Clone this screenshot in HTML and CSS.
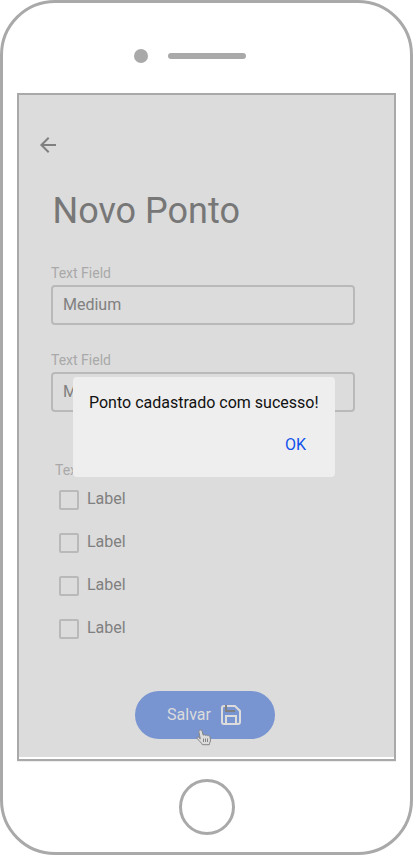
FILE: index.html
```html
<!DOCTYPE html>
<html lang="pt-BR">
<head>
<meta charset="utf-8">
<title>Novo Ponto</title>
<link rel="stylesheet" href="styles.css">
</head>
<body>
<div class="phone">
  <div class="speaker"><span class="camera"></span><span class="slot"></span></div>
  <div class="screen">
    <main class="page">
      <svg class="back" width="24" height="24" viewBox="0 0 24 24"><path d="M20 12H5.4M12.7 4.7L5.4 12l7.3 7.3" fill="none" stroke="#808080" stroke-width="2"/></svg>
      <h1 class="title">Novo Ponto</h1>
      <div class="field"><div class="caption">Text Field</div><div class="input">Medium</div></div>
      <div class="field"><div class="caption">Text Field</div><div class="input">Medium</div></div>
      <div class="options">
        <div class="caption">Text Field</div>
        <div class="option"><span class="box"></span><span class="name">Label</span></div>
        <div class="option"><span class="box"></span><span class="name">Label</span></div>
        <div class="option"><span class="box"></span><span class="name">Label</span></div>
        <div class="option"><span class="box"></span><span class="name">Label</span></div>
      </div>
      <div class="save">
        <span class="save-text">Salvar</span>
        <svg width="20" height="20" viewBox="0 0 20 20" fill="none" stroke="#dcdcdc" stroke-width="2"><path d="M3 1H14L19 6V17Q19 19 17 19H3Q1 19 1 17V3Q1 1 3 1Z"/><path d="M5 19V11H15V19"/><path d="M5 0V6H14" stroke="#808080"/></svg>
      </div>
      <svg class="cursor" width="16" height="18" viewBox="0 0 16 18"><path d="M4.3 1C5.5.6 6 1.7 6.2 2.6L7.2 6.2C8 5.4 9 5.7 9.4 6.4 10.2 5.7 11.2 6 11.6 6.8 12.6 6.2 13.8 6.8 14 8L14.5 11C14.6 12.5 13.5 13.5 13.3 15.7H6.3C5.6 13.7 3 12 1.4 9.7 .4 8.4 1.7 7.5 2.8 8.4L4.3 9.8 2.9 3C2.7 2 3.3 1.2 4.3 1Z" fill="#dcdcdc" stroke="#858585"/><path d="M7.5 9.5V13M9.5 9.5V13M11.5 9.5V13" stroke="#858585" fill="none"/></svg>
    </main>
    <div class="dialog"><div class="message">Ponto cadastrado com sucesso!</div><div class="ok">OK</div></div>
  </div>
  <div class="home"></div>
</div>
</body>
</html>
```
FILE: styles.css
```css
* { box-sizing: border-box; }
body { margin: 0; background: #fff; font-family: Roboto, sans-serif; }
.phone {
  width: 413px; height: 855px;
  border: 3px solid #a9a9a9; border-radius: 55px;
  display: flex; flex-direction: column;
}
.speaker {
  height: 90px; padding: 46px 0 0 131px;
  display: flex; align-items: flex-start; gap: 20px;
}
.camera { width: 14px; height: 14px; border-radius: 50%; background: #a9a9a9; }
.slot { width: 78px; height: 6px; margin-top: 4px; border-radius: 3px; background: #a9a9a9; }
.screen {
  position: relative; width: 379px; height: 668px; margin-left: 14px;
  border: 2px solid #a9a9a9; box-shadow: 0 1px 0 #eee;
}
.page { position: relative; height: 662px; background: #dcdcdc; padding: 38px 39px 0 32px; color: #808080; }
.back { display: block; margin-left: -15px; }
.title {
  margin: 33px 0 33px 1.5px; height: 42px;
  font-size: 36px; line-height: 42px; font-weight: 400; color: #777; white-space: nowrap;
}
.field { height: 87px; }
.caption { height: 16px; margin-bottom: 4px; font-size: 14px; line-height: 16px; color: #a9a9a9; }
.input {
  height: 40px; border: 2px solid #b9b9b9; border-radius: 4px;
  padding-left: 10px; font-size: 16px; line-height: 36px;
}
.options { margin: 23px 0 0 4px; }
.options .caption { margin-bottom: 12px; }
.option { display: flex; gap: 8px; height: 43px; padding-left: 4px; }
.box { width: 20px; height: 20px; border: 2px solid #b9b9b9; border-radius: 2px; }
.name { height: 20px; font-size: 16px; line-height: 18px; }
.save {
  width: 140px; height: 48px; margin: 29px 0 0 84px; padding-right: 2px; border-radius: 24px;
  background: #7894d1; color: #dcdcdc; font-size: 16px;
  display: flex; align-items: center; justify-content: center; gap: 10px;
}
.save-text { padding-bottom: 2px; }
.cursor { position: absolute; left: 177px; top: 634px; }
.dialog {
  position: absolute; left: 54px; top: 282px; width: 262px; height: 100px;
  background: #eee; border-radius: 4px; padding: 16px; font-size: 16px; line-height: 20px; color: #111;
}
.message { white-space: nowrap; }
.ok { margin: 22px 13px 0 0; text-align: right; color: #1152eb; }
.home { width: 56px; height: 56px; margin: 18px 0 0 176px; border: 3px solid #a9a9a9; border-radius: 50%; }
```
